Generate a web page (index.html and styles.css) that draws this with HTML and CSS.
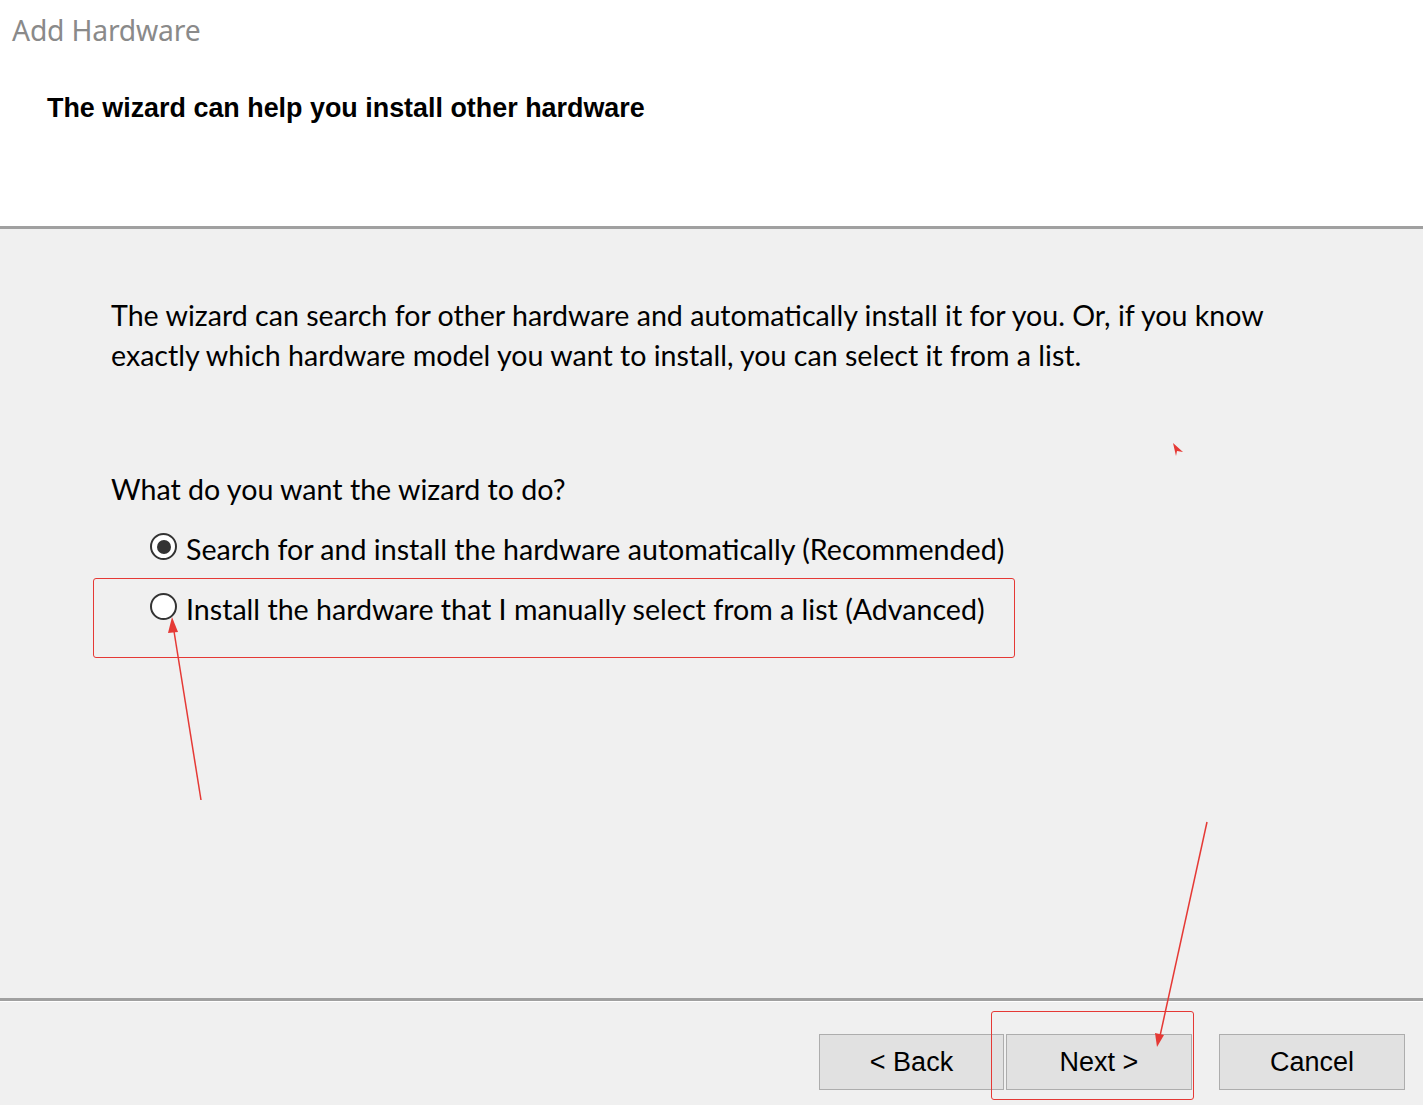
FILE: index.html
```html
<!DOCTYPE html>
<html>
<head>
<meta charset="utf-8">
<link rel="stylesheet" href="styles.css">
</head>
<body>
<div class="window">
  <header class="header">
    <div class="app-title">Add Hardware</div>
    <h1 class="heading">The wizard can help you install other hardware</h1>
  </header>
  <main class="content">
    <p class="intro">The wizard can search for other hardware and automatically install it for you. Or, if you know exactly which hardware model you want to install, you can select it from a list.</p>
    <p class="question">What do you want the wizard to do?</p>
    <div class="options">
      <div class="option"><span class="radio checked"></span><span class="label">Search for and install the hardware automatically (Recommended)</span></div>
      <div class="option"><span class="radio"></span><span class="label">Install the hardware that I manually select from a list (Advanced)</span></div>
    </div>
  </main>
  <footer class="footer">
    <div class="btn-group">
      <button class="btn">&lt; Back</button>
      <button class="btn">Next &gt;</button>
    </div>
    <button class="btn">Cancel</button>
  </footer>
  <div class="mark mark-option"></div>
  <div class="mark mark-next"></div>
  <svg class="arrows" width="1423" height="1105" viewBox="0 0 1423 1105">
    <g stroke="#e53935" stroke-width="1.5" fill="none">
      <line x1="201" y1="800" x2="173" y2="625"/>
      <line x1="1207" y1="822" x2="1160" y2="1036"/>
    </g>
    <g fill="#e53935">
      <polygon points="172,617 168,633 178,632"/>
      <polygon points="1157,1047 1155,1033 1164,1035"/>
      <polygon points="1173,443 1183,452 1177,451 1176,456"/>
    </g>
  </svg>
</div>
</body>
</html>
```
FILE: styles.css
```css
* { box-sizing: border-box; }
html, body { margin: 0; padding: 0; }
body {
  width: 1423px;
  height: 1105px;
  background: #f0f0f0;
  overflow: hidden;
  font-family: "Lato", "Noto Sans", sans-serif;
}
.window {
  position: relative;
  width: 1423px;
  height: 1105px;
  display: flex;
  flex-direction: column;
}
.header {
  height: 229px;
  background: #ffffff;
  border-bottom: 3px solid #a0a0a0;
  padding: 12px 0 0 12px;
  flex: none;
}
.app-title {
  font-family: "Noto Sans", "Open Sans", sans-serif;
  font-weight: 400;
  font-size: 28.3px;
  line-height: 36px;
  color: #8a8a8a;
  letter-spacing: -0.2px;
}
.heading {
  margin: 43px 0 0 35px;
  font-family: "Liberation Sans", Arial, sans-serif;
  font-weight: 700;
  font-size: 26.9px;
  line-height: 34px;
  color: #000;
}
.content {
  flex: 1;
  padding: 66px 0 0 111px;
  color: #000;
}
.intro {
  margin: 0;
  width: 1180px;
  font-size: 28.6px;
  line-height: 40px;
}
.question {
  margin: 94px 0 0 0;
  font-size: 28.6px;
  line-height: 40px;
}
.options {
  margin: 20px 0 0 39px;
  display: flex;
  flex-direction: column;
  gap: 20px;
}
.option {
  display: flex;
  align-items: center;
  gap: 9px;
  font-size: 28.6px;
  line-height: 40px;
}
.radio {
  width: 27px;
  height: 27px;
  border-radius: 50%;
  border: 2px solid #333;
  background: #fff;
  position: relative;
  flex: none;
  margin-top: -5px;
}
.radio.checked::after {
  content: "";
  position: absolute;
  left: 4.5px;
  top: 4.5px;
  width: 14px;
  height: 14px;
  border-radius: 50%;
  background: #333;
}
.footer {
  height: 107px;
  flex: none;
  border-top: 3px solid #a0a0a0;
  box-shadow: inset 0 1px 0 #ffffff;
  display: flex;
  justify-content: flex-end;
  align-items: flex-start;
  padding: 33px 18px 0 0;
  gap: 27px;
}
.btn-group {
  display: flex;
  gap: 2px;
}
.btn {
  width: 186px;
  height: 56px;
  background: #e1e1e1;
  border: 1px solid #adadad;
  font-family: "Liberation Sans", Arial, sans-serif;
  font-size: 27px;
  color: #000;
  padding: 0;
}
.btn-group .btn:first-child {
  width: 185px;
}
.mark {
  position: absolute;
  border: 1.5px solid #e53935;
  border-radius: 3px;
}
.mark-option {
  left: 93px;
  top: 578px;
  width: 922px;
  height: 80px;
}
.mark-next {
  left: 991px;
  top: 1011px;
  width: 203px;
  height: 89px;
}
.arrows {
  position: absolute;
  left: 0;
  top: 0;
  pointer-events: none;
}
```
